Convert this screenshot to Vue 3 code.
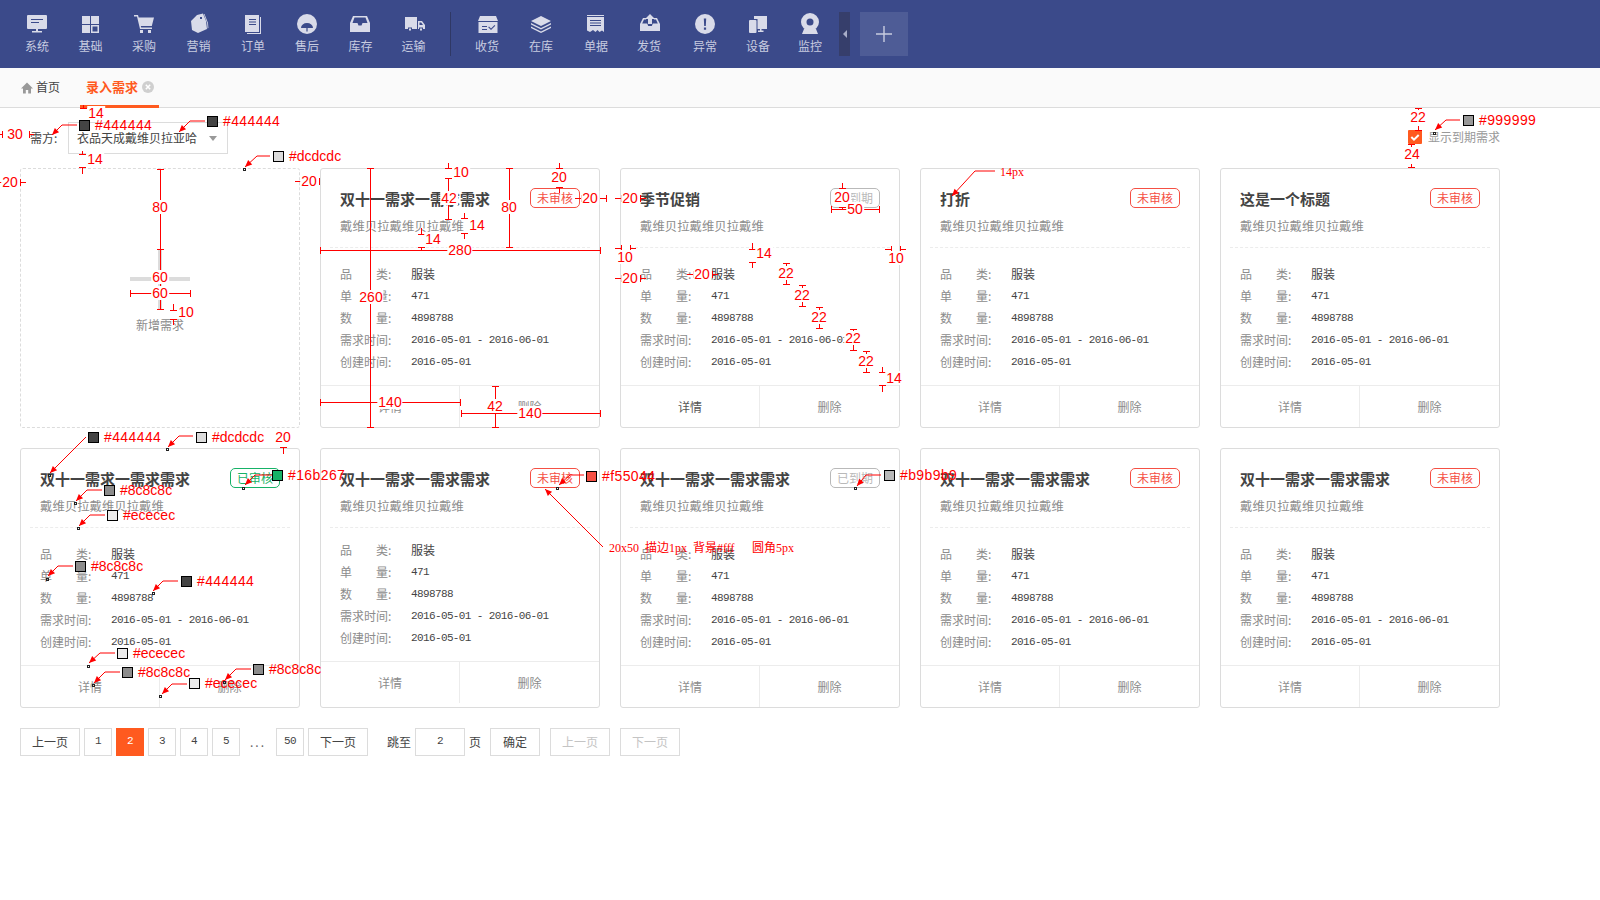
<script setup>
const navLeft = [
  { name: '系统', w: 54, d: 'M3 3h18a1 1 0 0 1 1 1v12a1 1 0 0 1-1 1h-8v2h4v1.5H7V19h4v-2H3a1 1 0 0 1-1-1V4a1 1 0 0 1 1-1z', cut: 'M6 7h12v1H6zM6 10h8v1H6z' },
  { name: '基础', w: 53, d: 'M3 4h8v8H3zM12 4h8v8h-8zM3 13h8v8H3zM12 13h8v8h-8z', cut: 'M13.5 14.5h5v5h-5z' },
  { name: '采购', w: 54, d: 'M2 3h4l.7 2.5H22l-2.2 8.5H8.8l.4 1.5H20V17H8L5 4.5H2zM8 18h3v3H8zM16 18h3v3h-3z' },
  { name: '营销', w: 55, d: 'M10 3l6-1.500 3 7.500 1 8-9 4-6-3-1-9zM17.500 2l3.500 9 .4 5-.8.400-.4-5.200L16.800 2z', cut: 'M13 5h2v2h-2z' },
  { name: '订单', w: 54, d: 'M4 3h14v17H4zM19 5h1v17H6v-1h13z', cut: 'M8 7h7v1H8zM8 9.500h7v1H8zM8 12h7v1H8z' },
  { name: '售后', w: 54, d: 'M12 2a10 10 0 1 1 0 20a10 10 0 0 1 0-20z', cut: 'M6 16a6 5 0 0 1 12 0h-5.400v3.500h-1.200V16z' },
  { name: '库存', w: 53, d: 'M4 4h14l3 7v9H1v-9z', cut: 'M5.500 5.500L3.500 11h5l1 2.500h3l1-2.500h5l-2-5.500z' },
  { name: '运输', w: 53, d: 'M3 5h12v12H3zM16 9h4l3 4v4h-7z', cut: 'M17.500 10.500V13h3.500l-1.800-2.500zM6 15.500h4v4H6zM17 15.500h4v4h-4z', d2: 'M7 16.500h2v2H7zM18 16.500h2v2h-2z' }
]
const navRight = [
  { name: '收货', w: 52, d: 'M5 4h16l2 5H3zM3.500 10h19v11h-19z', cut: 'M7 14h5v1H7zM7 17h5v1H7zM14 14.500l2 2 3.500-3.500.8.800-4.300 4.300-2.800-2.800z' },
  { name: '在库', w: 56, d: 'M12 4l10 5-10 5-10-5zM2 11l10 5 10-5v1.500l-10 5-10-5zM2 14.500l10 5 10-5V16l-10 5-10-5z' },
  { name: '单据', w: 54, d: 'M3 3h17v1H3zM3 5h17v15l-2-1.500-2.500 1.500-2-2-2 2-2.500-2L6 20l-3-1.500z', cut: 'M6 8h11v1H6zM6 10.500h11v1H6zM6 13h11v1H6z' },
  { name: '发货', w: 52, d: 'M3 12l3-6h3v1.500H7l-1.800 4h5l1 2.500h3.600l1-2.500h5l-1.800-4H17V6h3l3 6v7H3zM13 2l5 5h-3v5h-4V7H8z' },
  { name: '异常', w: 60, d: 'M12 2a10 10 0 1 1 0 20a10 10 0 0 1 0-20z', cut: 'M10.800 6.500h2.400l-.4 7.500h-1.600zM10.900 15.500h2.200v2.200h-2.200z' },
  { name: '设备', w: 46, d: 'M8 4h13v13h-5.500v1.500h2V20H12v-1.500h2V17h-3V7H8z', d2: 'M4 8h5.500a1 1 0 0 1 1 1v11a1 1 0 0 1-1 1H4a1 1 0 0 1-1-1V9a1 1 0 0 1 1-1z', cut: 'M3 7h8.500v15H2z' },
  { name: '监控', w: 58, d: 'M12 1a9 9 0 1 1 0 18a9 9 0 0 1 0-18zM6 17h12l2 5H4z', cut: 'M12 6.500a3.500 3.500 0 1 1 0 7a3.500 3.500 0 0 1 0-7z' }
]

const makeCard = (title, tag = '未审核', extra = {}) => ({ title, tag, ...extra })
const row1 = [
  makeCard('双十一需求一需求需求'),
  makeCard('季节促销', '已到期', { darkLink: true }),
  makeCard('打折'),
  makeCard('这是一个标题')
]
const row2 = [
  makeCard('双十一需求一需求需求', '已审核'),
  makeCard('双十一需求一需求需求', '未审核', { tight: true }),
  makeCard('双十一需求一需求需求', '已到期'),
  makeCard('双十一需求一需求需求'),
  makeCard('双十一需求一需求需求')
]
const tagClass = { 未审核: 'tag-red', 已审核: 'tag-green', 已到期: 'tag-grey' }
const rows = [
  { head: '品', tail: '类:', value: '服装' },
  { head: '单', tail: '量:', value: '471' },
  { head: '数', tail: '量:', value: '4898788' },
  { label: '需求时间:', value: '2016-05-01 - 2016-06-01' },
  { label: '创建时间:', value: '2016-05-01' }
]

// red spec marks drawn on top of the page
const V = (x, a, b) => `M${x - 3} ${a}h7M${x} ${a}V${b}M${x - 3} ${b}h7`
const H = (y, a, b) => `M${a} ${y - 3}v7M${a} ${y}H${b}M${b} ${y - 3}v7`
const Tt = (x, y, n) => `M${x - 3} ${y}h7M${x} ${y}v${n}`
const Tb = (x, y, n) => `M${x - 3} ${y}h7M${x} ${y}v${-n}`
const Hl = (y, x, n) => `M${x} ${y - 3}v7M${x} ${y}h${n}`
const Hr = (y, x, n) => `M${x} ${y - 3}v7M${x} ${y}h${-n}`

const dimPath = [
  Tb(83, 108, 3), Hr(134, 2, 3), Hl(134, 29, 5), Tb(82, 154, 3), Tt(82, 167, 7),
  Hr(182, 2, 2), Hl(182, 20, 6), Hr(181, 301, 6), Hl(181, 319, 1),
  V(160, 169, 249), V(160, 249, 309), H(293, 130, 190), Tb(173, 310, 6), Tt(173, 319, 6),
  V(370, 168, 427), H(250, 320, 600), V(509, 168, 247), Tb(448, 168, 5), V(448, 178, 219),
  Tb(464, 218, 5), Tt(464, 233, 6), Tb(421, 234, 6), Tt(421, 247, 3), Tb(559, 168, 5), Tt(559, 187, 6),
  Hr(198, 581, 6), Hr(198, 606, 6), H(402, 320, 460), H(413, 461, 600), V(495, 386, 427),
  Hr(198, 621, 6), Hl(198, 640, 6), Tb(842, 188, 5), Tt(842, 207, 3), H(209, 831, 879),
  Hr(248, 621, 6), Hl(248, 630, 6), Hr(249, 891, 6), Hl(249, 900, 6), Tb(752, 249, 6), Tt(752, 262, 6),
  Hr(278, 621, 6), Hl(278, 640, 6), Hr(274, 693, 6), Hl(274, 712, 6),
  Tt(786, 263, 5), Tb(786, 284, 5), Tt(802, 285, 5), Tb(802, 306, 5), Tt(819, 307, 5), Tb(819, 328, 5),
  Tt(853, 329, 5), Tb(853, 350, 5), Tt(866, 351, 5), Tb(866, 372, 5), Tb(882, 372, 5), Tt(882, 385, 7),
  Tt(1418, 108, 4), Tb(1418, 130, 4), Tt(1411, 144, 3), Tb(1411, 167, 3), Tt(283, 447, 7)
].join('')

const dimLabels = [
  ['14', 96, 113], ['30', 15, 134], ['14', 95, 159], ['20', 10, 182], ['20', 309, 181],
  ['80', 160, 207], ['60', 160, 277], ['60', 160, 293], ['10', 186, 312],
  ['260', 371, 297], ['280', 460, 250], ['80', 509, 207], ['10', 461, 172], ['42', 449, 198],
  ['14', 477, 225], ['14', 433, 239], ['20', 559, 177], ['20', 590, 198],
  ['140', 390, 402], ['140', 530, 413], ['42', 495, 406],
  ['20', 630, 198], ['20', 842, 197], ['50', 855, 209], ['10', 625, 257], ['10', 896, 258],
  ['14', 764, 253], ['20', 630, 278], ['20', 702, 274],
  ['22', 786, 273], ['22', 802, 295], ['22', 819, 317], ['22', 853, 338], ['22', 866, 361], ['14', 894, 378],
  ['22', 1418, 117], ['24', 1412, 154], ['20', 283, 437]
]

const pointers = [
  { hex: '#444444', x: 79, y: 120, pts: [[77, 125], [62, 125], [52, 135]] },
  { hex: '#444444', x: 207, y: 116, pts: [[205, 121], [190, 121], [179, 132]] },
  { hex: '#dcdcdc', x: 273, y: 151, pts: [[270, 156], [257, 156], [245, 167]], dot: [243, 168] },
  { hex: '#999999', x: 1463, y: 115, pts: [[1460, 120], [1446, 120], [1435, 130]], dot: [1433, 132] },
  { hex: '#444444', x: 88, y: 432, pts: [[86, 437], [50, 473]], dot: [48, 474] },
  { hex: '#dcdcdc', x: 196, y: 432, pts: [[193, 436], [179, 436], [168, 447]], dot: [166, 448] },
  { hex: '#16b267', x: 272, y: 470, pts: [[272, 475], [255, 475], [245, 485]], dot: [242, 487] },
  { hex: '#8c8c8c', x: 104, y: 485, pts: [[102, 490], [87, 490], [76, 501]], dot: [74, 502] },
  { hex: '#ececec', x: 107, y: 510, pts: [[105, 515], [90, 515], [79, 526]], dot: [77, 527] },
  { hex: '#8c8c8c', x: 75, y: 561, pts: [[73, 566], [58, 566], [48, 576]], dot: [46, 578] },
  { hex: '#444444', x: 181, y: 576, pts: [[178, 581], [163, 581], [153, 591]], dot: [152, 592] },
  { hex: '#ececec', x: 117, y: 648, pts: [[115, 653], [100, 653], [89, 663]], dot: [87, 665] },
  { hex: '#8c8c8c', x: 122, y: 667, pts: [[120, 672], [105, 672], [94, 683]], dot: [92, 684] },
  { hex: '#ececec', x: 189, y: 678, pts: [[187, 684], [172, 684], [162, 694]], dot: [159, 695] },
  { hex: '#8c8c8c', x: 253, y: 664, pts: [[251, 669], [236, 669], [225, 680]], dot: [223, 681] },
  { hex: '#f55044', x: 586, y: 471, pts: [[584, 475], [570, 475], [559, 485]], dot: [556, 487] },
  { hex: '#b9b9b9', x: 884, y: 470, pts: [[881, 475], [866, 475], [857, 486]], dot: [854, 487] }
]
const bareArrows = [
  [[995, 171], [975, 171], [952, 196]],
  [[603, 547], [545, 489]]
]
const notes = [
  ['14px', 1000, 172],
  ['20x50', 609, 548],
  ['描边1px', 645, 548],
  ['背景#fff', 693, 548],
  ['圆角5px', 752, 548]
]
const narrowHex = ['#dcdcdc', '#8c8c8c', '#ececec']

const linePoints = pts => pts.map(p => p.join(',')).join(' ')
const arrowHead = pts => {
  const [x1, y1] = pts[pts.length - 2]
  const [x2, y2] = pts[pts.length - 1]
  const len = Math.hypot(x2 - x1, y2 - y1)
  const ux = (x2 - x1) / len
  const uy = (y2 - y1) / len
  const bx = x2 - ux * 7
  const by = y2 - uy * 7
  return `${x2},${y2} ${bx - uy * 3},${by + ux * 3} ${bx + uy * 3},${by - ux * 3}`
}
const arrows = [...pointers.map(p => p.pts), ...bareArrows]
</script>

<template>
  <div class="page">
    <header class="topbar">
      <nav class="nav-group">
        <a v-for="item in navLeft" :key="item.name" class="nav-item" :style="{ width: item.w + 'px' }">
          <svg class="nav-icon" viewBox="0 0 24 24" width="24" height="24">
            <path :d="item.d" />
            <path v-if="item.cut" class="cut" :d="item.cut" />
            <path v-if="item.d2" :d="item.d2" />
          </svg>
          <span>{{ item.name }}</span>
        </a>
      </nav>
      <i class="nav-divider"></i>
      <nav class="nav-group">
        <a v-for="item in navRight" :key="item.name" class="nav-item" :style="{ width: item.w + 'px' }">
          <svg class="nav-icon" viewBox="0 0 24 24" width="24" height="24">
            <path :d="item.d" />
            <path v-if="item.cut" class="cut" :d="item.cut" />
            <path v-if="item.d2" :d="item.d2" />
          </svg>
          <span>{{ item.name }}</span>
        </a>
      </nav>
      <button class="nav-collapse"><i></i></button>
      <button class="nav-add">
        <svg viewBox="0 0 16 16" width="16" height="16"><path d="M0 7.300h16v1.400H0zM7.300 0h1.400v16H7.300z" /></svg>
      </button>
    </header>

    <div class="tabbar">
      <a class="tab-home">
        <svg viewBox="0 0 12 12" width="12" height="12"><path d="M6 .500L12 6.500h-2V11.500H7.200V8H4.800v3.500H2V6.500H0z" /></svg>
        首页
      </a>
      <a class="tab-active">
        录入需求
        <svg viewBox="0 0 12 12" width="12" height="12">
          <circle cx="6" cy="6" r="6" fill="#cfcfcf" />
          <path d="M3.800 3.800l4.400 4.400M8.200 3.800l-4.400 4.400" stroke="#fff" stroke-width="1.500" />
        </svg>
      </a>
    </div>

    <div class="toolbar">
      <div class="supplier">
        <label>需方:</label>
        <div class="select">
          <span>衣品天成戴维贝拉亚哈</span>
          <i class="caret"></i>
        </div>
      </div>
      <div class="expired">
        <span class="check">
          <svg viewBox="0 0 14 14" width="14" height="14"><path d="M3.300 7l2.700 2.700 4.700-4.700" fill="none" stroke="#fff" stroke-width="2" /></svg>
        </span>
        显示到期需求
      </div>
    </div>

    <main class="grid">
      <div class="card card-add">
        <div class="add-plus"></div>
        <div class="add-text">新增需求</div>
      </div>
      <template v-for="list in [row1, row2]">
        <div v-for="(card, i) in list" :key="card.title + i" class="card" :class="{ 'card-tight': card.tight }">
          <div class="card-head">
            <div class="title-line">
              <h3>{{ card.title }}</h3>
              <span class="tag" :class="tagClass[card.tag]">{{ card.tag }}</span>
            </div>
            <p>戴维贝拉戴维贝拉戴维</p>
          </div>
          <div class="card-body">
            <div v-for="row in rows" :key="row.value" class="row">
              <span v-if="row.label" class="row-label">{{ row.label }}</span>
              <span v-else class="row-label split"><b>{{ row.head }}</b><b>{{ row.tail }}</b></span>
              <span class="row-value">{{ row.value }}</span>
            </div>
          </div>
          <div class="card-foot" :class="{ 'foot-dark': card.darkLink }">
            <a>详情</a>
            <a>删除</a>
          </div>
        </div>
      </template>
    </main>

    <div class="pager">
      <a class="wide">上一页</a>
      <a class="num">1</a>
      <a class="num current">2</a>
      <a class="num">3</a>
      <a class="num">4</a>
      <a class="num">5</a>
      <span class="dots">...</span>
      <a class="num">50</a>
      <a class="wide">下一页</a>
      <span class="jump">跳至</span>
      <a class="input num">2</a>
      <span>页</span>
      <a class="confirm">确定</a>
      <a class="wide off">上一页</a>
      <a class="wide off">下一页</a>
    </div>

    <div class="spec">
      <svg class="spec-lines" width="1600" height="900">
        <path class="dim" :d="dimPath" />
        <polyline v-for="(pts, i) in arrows" :key="i" class="lead" :points="linePoints(pts)" />
        <polygon v-for="(pts, i) in arrows" :key="'a' + i" class="head" :points="arrowHead(pts)" />
      </svg>
      <span v-for="(d, i) in dimLabels" :key="i" class="dim-label" :style="{ left: d[1] + 'px', top: d[2] + 'px' }">{{ d[0] }}</span>
      <template v-for="(p, i) in pointers" :key="i">
        <i class="swatch" :style="{ left: p.x + 'px', top: p.y + 'px', background: p.hex }"></i>
        <span class="hex" :class="{ narrow: narrowHex.includes(p.hex) }" :style="{ left: p.x + 16 + 'px', top: p.y + 5 + 'px' }">{{ p.hex }}</span>
        <i v-if="p.dot" class="dot" :style="{ left: p.dot[0] + 'px', top: p.dot[1] + 'px' }"></i>
      </template>
      <span v-for="n in notes" :key="n[0]" class="note" :style="{ left: n[1] + 'px', top: n[2] + 'px' }">{{ n[0] }}</span>
    </div>
  </div>
</template>

<style>
html, body { background: #fff; }
</style>

<style scoped>
.page {
  position: relative;
  width: 1600px;
  height: 900px;
  overflow: hidden;
  font: 12px/1.2 "Noto Sans CJK SC", "Liberation Sans", sans-serif;
  color: #444;
}
a { cursor: pointer; }

.topbar {
  height: 68px;
  background: #3b4a8a;
  display: flex;
  align-items: flex-start;
  padding-left: 10px;
  box-sizing: border-box;
}
.nav-group { display: flex; }
.nav-item {
  display: flex;
  flex-direction: column;
  align-items: center;
  padding-top: 12px;
  color: #c8cce0;
}
.nav-item span { margin-top: 3px; line-height: 14px; }
.nav-icon { display: block; fill: #d9dbe9; }
.nav-icon .cut { fill: #3b4a8a; }
.nav-divider {
  width: 1px;
  height: 44px;
  margin: 12px 10px;
  background: #2f3865;
}
.nav-collapse {
  width: 11px;
  height: 44px;
  margin-top: 12px;
  padding: 0;
  border: 0;
  background: #363e6b;
  display: flex;
  align-items: center;
  justify-content: center;
}
.nav-collapse i {
  width: 0;
  height: 0;
  border: 4px solid transparent;
  border-left: 0;
  border-right: 4px solid #a9aec8;
}
.nav-add {
  width: 48px;
  height: 44px;
  margin: 12px 0 0 10px;
  padding: 0;
  border: 0;
  background: #4e5c96;
  display: flex;
  align-items: center;
  justify-content: center;
}
.nav-add svg { fill: #c8cce0; }

.tabbar {
  height: 40px;
  box-sizing: border-box;
  display: flex;
  background: #fafafa;
  border-bottom: 1px solid #dcdcdc;
  padding-left: 21px;
}
.tab-home {
  display: flex;
  align-items: center;
  gap: 3px;
  width: 59px;
  color: #444;
}
.tab-home svg { fill: #999; }
.tab-active {
  display: flex;
  align-items: center;
  gap: 4px;
  box-sizing: border-box;
  width: 79px;
  height: 40px;
  padding: 0 0 0 6px;
  border-bottom: 3px solid #ff5a1f;
  color: #ff5a1f;
  font-size: 13px;
  font-weight: 700;
}

.toolbar {
  height: 60px;
  box-sizing: border-box;
  padding: 14px 100px 14px 30px;
  display: flex;
  justify-content: space-between;
}
.supplier { display: flex; align-items: center; }
.supplier label { width: 38px; color: #444; }
.select {
  width: 160px;
  height: 32px;
  box-sizing: border-box;
  border: 1px solid #dcdcdc;
  padding: 0 9px 0 8px;
  display: flex;
  align-items: center;
  justify-content: space-between;
  color: #444;
}
.caret {
  width: 0;
  height: 0;
  border: 4px solid transparent;
  border-top: 5px solid #999;
  border-bottom: 0;
  margin-right: 1px;
}
.expired {
  display: flex;
  align-items: center;
  gap: 6px;
  height: 14px;
  margin-top: 8px;
  color: #999;
}
.check {
  width: 14px;
  height: 14px;
  background: #ff5a1f;
  border-radius: 1px;
}
.check svg { display: block; }

.grid {
  width: 1480px;
  margin-left: 20px;
  display: grid;
  grid-template-columns: repeat(5, 280px);
  grid-auto-rows: 260px;
  gap: 20px;
}
.card {
  box-sizing: border-box;
  border: 1px solid #dcdcdc;
  border-radius: 3px;
  display: flex;
  flex-direction: column;
}
.card-add {
  border-style: dashed;
  align-items: center;
}
.add-plus {
  position: relative;
  width: 60px;
  height: 60px;
  margin-top: 80px;
}
.add-plus::before,
.add-plus::after {
  content: "";
  position: absolute;
  background: #dcdcdc;
}
.add-plus::before { left: 0; right: 0; top: 28px; height: 4px; }
.add-plus::after { top: 0; bottom: 0; left: 28px; width: 4px; }
.add-text { margin-top: 10px; line-height: 12px; color: #8c8c8c; }

.card-head {
  height: 79px;
  box-sizing: border-box;
  margin: 0 9px;
  padding: 19px 10px 0;
  border-bottom: 1px dashed #ececec;
}
.title-line { display: flex; justify-content: space-between; }
.title-line h3 {
  margin: 0;
  font-size: 15px;
  line-height: 22px;
  font-weight: 700;
  color: #444;
}
.tag {
  box-sizing: border-box;
  width: 50px;
  height: 20px;
  border: 1px solid;
  border-radius: 5px;
  background: #fff;
  text-align: center;
  line-height: 17px;
}
.tag-red { color: #f55044; border-color: #f55044; }
.tag-green { color: #16b267; border-color: #16b267; }
.tag-grey { color: #b9b9b9; border-color: #b9b9b9; }
.card-head p {
  margin: 6px 0 0;
  font-size: 12.4px;
  line-height: 20px;
  color: #8c8c8c;
}
.card-body {
  flex: 1;
  padding: 15px 0 0 19px;
}
.card-tight .card-body { padding-top: 11px; }
.card-tight .card-foot { margin-bottom: 4px; }
.row { display: flex; height: 22px; line-height: 22px; }
.row-label { width: 71px; color: #8c8c8c; }
.row-label.split { display: flex; justify-content: space-between; width: 54px; margin-right: 17px; }
.row-label.split b { font-weight: 400; }
.row-label.split b:last-child { width: 18px; }
.row-value { color: #444; }
.row + .row .row-value {
  font-family: "Liberation Mono", monospace;
  font-size: 11px;
  letter-spacing: -.62px;
}
.card-foot {
  height: 42px;
  box-sizing: border-box;
  border-top: 1px solid #ececec;
  display: flex;
}
.card-foot a {
  flex: 1;
  text-align: center;
  line-height: 41px;
  color: #8c8c8c;
}
.card-foot a:first-child { flex: 0 0 139px; box-sizing: border-box; border-right: 1px solid #ececec; }
.foot-dark a:first-child { color: #555; }

.pager {
  display: flex;
  align-items: center;
  gap: 4px;
  height: 28px;
  margin: 20px 0 0 20px;
}
.pager a {
  box-sizing: border-box;
  height: 28px;
  border: 1px solid #dcdcdc;
  text-align: center;
  line-height: 25px;
  color: #444;
}
.pager .wide { width: 60px; }
.pager .num {
  width: 28px;
  font-family: "Liberation Mono", monospace;
  font-size: 11px;
  letter-spacing: -.5px;
}
.pager .current { background: #ff5a1f; border-color: #ff5a1f; color: #fff; }
.pager .dots {
  width: 28px;
  text-align: center;
  letter-spacing: 2px;
  color: #666;
}
.pager .jump { margin-left: 15px; width: 24px; }
.pager .input { width: 50px; }
.pager .confirm { width: 50px; margin-left: 5px; }
.pager .off { color: #c4c4c4; margin-left: 6px; }

.spec {
  position: absolute;
  left: 0;
  top: 0;
  width: 1600px;
  height: 900px;
  pointer-events: none;
  color: #f00;
}
.spec-lines { position: absolute; left: 0; top: 0; }
.dim { fill: none; stroke: #f00; stroke-width: 1; shape-rendering: crispEdges; }
.lead { fill: none; stroke: #f00; stroke-width: 1; }
.head { fill: #f00; }
.dim-label {
  position: absolute;
  transform: translate(-50%, -50%);
  background: #fff;
  padding: 0 1px;
  font: 14px/14px "Liberation Sans", sans-serif;
}
.swatch {
  position: absolute;
  width: 11px;
  height: 11px;
  box-sizing: border-box;
  border: 1px solid #000;
}
.hex {
  position: absolute;
  transform: translateY(-50%);
  font: 14px/14px "Liberation Sans", sans-serif;
  letter-spacing: .4px;
}
.hex.narrow { letter-spacing: 0; }
.dot {
  position: absolute;
  width: 3px;
  height: 3px;
  box-sizing: border-box;
  border: 1px solid #222;
}
.note {
  position: absolute;
  transform: translateY(-50%);
  white-space: nowrap;
  font: 12px/14px "Liberation Serif", "Noto Sans CJK SC", serif;
}
</style>
